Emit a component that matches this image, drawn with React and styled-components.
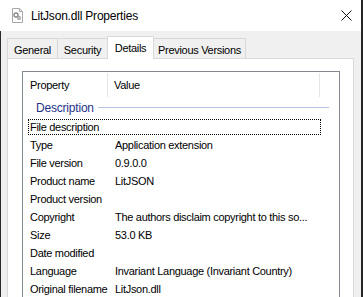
import styled, { createGlobalStyle } from "styled-components";

const Global = createGlobalStyle`
  html, body {
    margin: 0;
    padding: 0;
    background: #f0f0f0;
  }
  * {
    box-sizing: border-box;
  }
`

const Window = styled.div`
  width: 363px;
  height: 297px;
  overflow: hidden;
  display: flex;
  flex-direction: column;
  border-right: 2px solid #262626;
  font-family: "Liberation Sans", Arial, sans-serif;
  font-size: 11px;
  letter-spacing: -0.3px;
  color: #000;
`

const TitleBar = styled.div`
  height: 31px;
  flex: none;
  background: #fff;
  display: flex;
  align-items: center;
  padding: 0 9px 0 12px;
`

const Title = styled.span`
  margin-left: 8px;
  font-size: 12px;
  letter-spacing: -0.2px;
`

const Close = styled.span`
  margin-left: auto;
  display: flex;
`

const Body = styled.div`
  flex: 1;
  display: flex;
  flex-direction: column;
  background: #f0f0f0;
  border-left: 1px solid #2a2a2a;
  padding-top: 5px;
  min-height: 0;
`

const TabStrip = styled.div`
  display: flex;
  align-items: flex-end;
  padding-left: 6px;
  height: 22px;
  position: relative;
  z-index: 1;
`

const Tab = styled.div`
  width: ${p => p.$w}px;
  height: ${p => (p.$active ? 23 : 20)}px;
  margin-right: -1px;
  margin-bottom: ${p => (p.$active ? -1 : 0)}px;
  padding-top: ${p => (p.$active ? 0 : 2)}px;
  border: 1px solid #d9d9d9;
  border-bottom: none;
  background: ${p => (p.$active ? "#fff" : "#f0f0f0")};
  display: flex;
  align-items: center;
  justify-content: center;
  white-space: nowrap;
  position: relative;
  z-index: ${p => (p.$active ? 2 : 0)};
`

const Panel = styled.div`
  flex: 1;
  margin: 0 7px 0 6px;
  border: 1px solid #d9d9d9;
  border-bottom: none;
  background: #fff;
  display: flex;
  flex-direction: column;
  min-height: 0;
`

const List = styled.div`
  flex: 1;
  margin: 12px 13px 0 14px;
  border: 1px solid #828790;
  border-bottom: none;
  display: flex;
  flex-direction: column;
`

const Header = styled.div`
  height: 25px;
  flex: none;
  padding-top: 1px;
  display: flex;
`

const HeadCell = styled.div`
  width: ${p => p.$w}px;
  height: 24px;
  padding-left: ${p => p.$pad}px;
  padding-bottom: 1px;
  border-right: 1px solid #e5e5e5;
  display: flex;
  align-items: center;
`

const Group = styled.div`
  height: 21px;
  flex: none;
  display: flex;
  align-items: center;
  padding: 0 10px 0 13px;
  color: #1e3287;
  font-size: 12px;
  letter-spacing: -0.2px;
`

const GroupLine = styled.div`
  flex: 1;
  height: 1px;
  margin-left: 4px;
  background: #b6c5e6;
`

const Row = styled.div`
  width: 293px;
  height: 16px;
  flex: none;
  margin: 1px 0 1px 5px;
  padding-left: 1px;
  border: 1px ${p => (p.$focus ? "dotted #000" : "solid transparent")};
  display: flex;
  align-items: center;
  white-space: nowrap;
`

const Name = styled.span`
  width: 85px;
  flex: none;
`

const Value = styled.span`
  overflow: hidden;
`

function FileIcon() {
  return (
    <svg width="11" height="15" viewBox="0 0 11 15">
      <path d="M0.5 0.5h7l3 3v11h-10z" fill="#fff" stroke="#a8a8a8" />
      <path d="M7.5 0.5v3h3" fill="none" stroke="#a8a8a8" />
      <circle cx="4" cy="7" r="2" fill="none" stroke="#8a8a8a" strokeWidth="1.4" />
      <circle cx="7" cy="10" r="1.4" fill="none" stroke="#9a9a9a" strokeWidth="1.2" />
    </svg>
  )
}

const rows = [
  ["Type", "Application extension"],
  ["File version", "0.9.0.0"],
  ["Product name", "LitJSON"],
  ["Product version", ""],
  ["Copyright", "The authors disclaim copyright to this so..."],
  ["Size", "53.0 KB"],
  ["Date modified", ""],
  ["Language", "Invariant Language (Invariant Country)"],
  ["Original filename", "LitJson.dll"],
]

const tabs = [
  ["General", 51],
  ["Security", 51],
  ["Details", 47, true],
  ["Previous Versions", 93],
]

export default function App() {
  return (
    <Window>
      <Global />
      <TitleBar>
        <FileIcon />
        <Title>LitJson.dll Properties</Title>
        <Close>
          <svg width="11" height="11" viewBox="0 0 11 11">
            <path d="M0.5 0.5l10 10M10.5 0.5l-10 10" stroke="#111" strokeWidth="1" />
          </svg>
        </Close>
      </TitleBar>
      <Body>
        <TabStrip>
          {tabs.map(([label, w, active]) => (
            <Tab key={label} $w={w} $active={active}>{label}</Tab>
          ))}
        </TabStrip>
        <Panel>
          <List>
            <Header>
              <HeadCell $w={85} $pad={7}>Property</HeadCell>
              <HeadCell $w={212} $pad={6}>Value</HeadCell>
            </Header>
            <Group>
              Description
              <GroupLine />
            </Group>
            <Row $focus>
              <Name>File description</Name>
            </Row>
            {rows.map(([name, value]) => (
              <Row key={name}>
                <Name>{name}</Name>
                <Value>{value}</Value>
              </Row>
            ))}
          </List>
        </Panel>
      </Body>
    </Window>
  )
}
